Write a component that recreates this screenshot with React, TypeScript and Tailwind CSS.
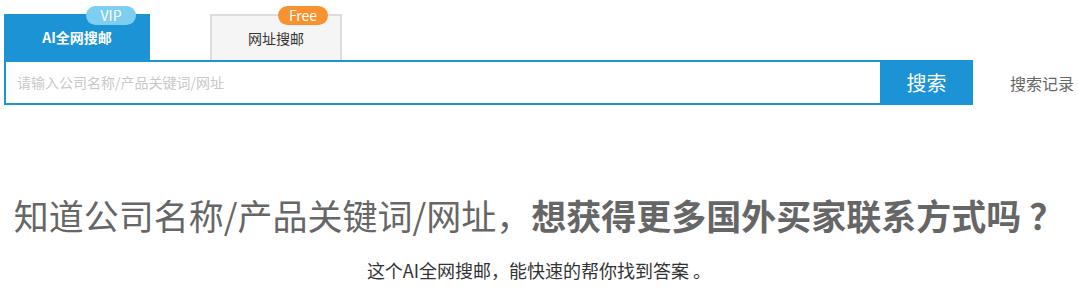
export default function App() {
  return (
    <div className="w-[1078px] h-[297px] bg-white font-['Microsoft_YaHei','Noto_Sans_CJK_SC',sans-serif] overflow-hidden">
      <div className="pl-[4px]">
        <div className="flex items-end h-[60px]">
          <div className="relative w-[146px] h-[46px] bg-[#1c93d5] flex items-center justify-center text-white text-[14px] font-bold">
            AI全网搜邮
            <span className="absolute left-[82px] top-[-8px] w-[50px] h-[19px] rounded-full bg-[#7ecdf3] text-white text-[14px] font-normal leading-[19px] text-center">
              VIP
            </span>
          </div>
          <div className="relative ml-[60px] w-[132px] h-[46px] bg-[#f5f5f5] border-2 border-b-0 border-[#dddddd] flex items-center justify-center text-[#333] text-[14px]">
            网址搜邮
            <span className="absolute left-[66px] top-[-10px] w-[50px] h-[19px] rounded-full bg-[#f7922e] text-white text-[14px] leading-[19px] text-center">
              Free
            </span>
          </div>
        </div>
        <div className="flex items-center h-[45px]">
          <div className="w-[876px] h-full border-2 border-r-0 border-[#1c93d5] flex items-center pl-[11px] text-[14px] text-[#c8c8c8]">
            请输入公司名称/产品关键词/网址
          </div>
          <button className="w-[93px] h-full bg-[#1c93d5] text-white text-[20px]">搜索</button>
          <span className="ml-[37px] text-[16px] text-[#666]">搜索记录</span>
        </div>
      </div>
      <h1 className="mt-[90px] text-center text-[35px] leading-[40px] text-[#666]">
        知道公司名称/产品关键词/网址，<span className="font-bold">想获得更多国外买家联系方式吗 ？</span>
      </h1>
      <p className="mt-[23px] text-center text-[18px] leading-[24px] text-[#333]">
        这个AI全网搜邮，能快速的帮你找到答案 。
      </p>
    </div>
  );
}
